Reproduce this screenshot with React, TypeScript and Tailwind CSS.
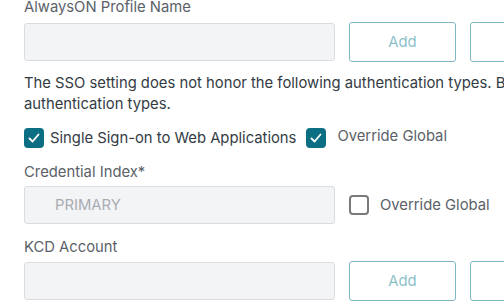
import React from "react";

const Check = () => (
  <span className="flex h-5 w-5 shrink-0 items-center justify-center rounded-[4px] bg-[#0b6e82]">
    <svg width="14" height="14" viewBox="0 0 14 14" fill="none">
      <path d="M2.5 7.5 L5.6 10.5 L11.5 3.5" stroke="white" strokeWidth="1.8" strokeLinecap="round" strokeLinejoin="round" />
    </svg>
  </span>
);

const Empty = () => (
  <span className="block h-5 w-5 shrink-0 rounded-[4px] border-2 border-[#7a7a7a] bg-white" />
);

export default function App() {
  return (
    <div className="h-[308px] w-[504px] overflow-hidden bg-white pl-6 font-['Inter',sans-serif] text-[14.8px]">
      <div className="-mt-[4px] h-[22px] whitespace-nowrap leading-[22px] text-[#5b6168]">AlwaysON Profile Name</div>
      <div className="mt-[4px] flex items-center gap-[14px]">
        <div className="h-[38px] w-[311px] shrink-0 rounded-[3px] border border-[#dadcdf] bg-[#f3f4f6]" />
        <button className="h-[40px] w-[107px] shrink-0 rounded-[3px] border border-[#7fb8c2] text-[#8cc1ca]">Add</button>
        <button className="h-[40px] w-[107px] shrink-0 rounded-[3px] border border-[#7fb8c2]" />
      </div>
      <p className="mt-[11px] whitespace-nowrap leading-[21px] text-[#333b44]">
        The SSO setting does not honor the following authentication types. Based on the selected
        <br />
        authentication types.
      </p>
      <div className="mt-[12px] flex items-center">
        <Check />
        <span className="ml-[6px] whitespace-nowrap text-[#333b44]">Single Sign-on to Web Applications</span>
        <span className="ml-[10px]"><Check /></span>
        <span className="ml-[11px] -mt-[4px] whitespace-nowrap text-[#5b6168]">Override Global</span>
      </div>
      <div className="mt-[12px] h-[22px] leading-[22px] text-[#5b6168]">Credential Index*</div>
      <div className="mt-[3px] flex items-center gap-[14px]">
        <div className="flex h-[38px] w-[311px] shrink-0 items-center rounded-[3px] border border-[#dadcdf] bg-[#f3f4f6] pl-[30px] text-[#a9adb3]">PRIMARY</div>
        <div className="flex items-center">
          <Empty />
          <span className="ml-[11px] whitespace-nowrap text-[#5b6168]">Override Global</span>
        </div>
      </div>
      <div className="mt-[12px] h-[22px] leading-[22px] text-[#5b6168]">KCD Account</div>
      <div className="mt-[3px] flex items-center gap-[14px]">
        <div className="h-[38px] w-[311px] shrink-0 rounded-[3px] border border-[#dadcdf] bg-[#f3f4f6]" />
        <button className="h-[40px] w-[107px] shrink-0 rounded-[3px] border border-[#7fb8c2] text-[#8cc1ca]">Add</button>
        <button className="h-[40px] w-[107px] shrink-0 rounded-[3px] border border-[#7fb8c2]" />
      </div>
    </div>
  );
}
